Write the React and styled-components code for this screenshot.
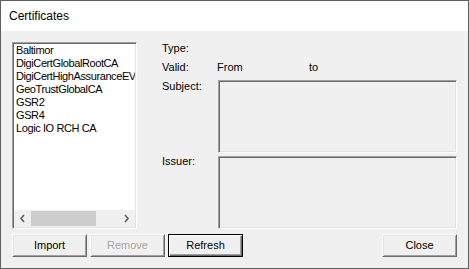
import styled, { createGlobalStyle, css } from "styled-components"

const GlobalStyle = createGlobalStyle`
    html, body {
        margin: 0;
        padding: 0;
        background: #f0f0f0;
    }
    body {
        font-family: "Liberation Sans", Arial, sans-serif;
    }
`

const sunken = css`
    box-sizing: border-box;
    border: 1px solid;
    border-color: #a0a0a0 #ffffff #ffffff #a0a0a0;
    box-shadow: inset 1px 1px 0 #696969, inset -1px -1px 0 #e3e3e3;
`

const Window = styled.div`
    width: 469px;
    height: 269px;
    box-sizing: border-box;
    border: 1px solid #5f5f5f;
    display: flex;
    flex-direction: column;
    background: #f0f0f0;
    color: #000;
`

const TitleBar = styled.div`
    flex: none;
    height: 30px;
    background: #ffffff;
    display: flex;
    align-items: center;
    padding-left: 8px;
    font-size: 12px;
`

const Body = styled.div`
    flex: 1;
    display: flex;
    flex-direction: column;
    gap: 5px;
    padding: 11px;
    font-size: 11px;
`

const Main = styled.div`
    display: flex;
    height: 187px;
`

const ListBox = styled.div`
    ${sunken};
    width: 125px;
    height: 100%;
    background: #ffffff;
    display: flex;
    flex-direction: column;
    padding: 1px;
`

const Items = styled.div`
    flex: 1;
    overflow: hidden;
    padding-left: 2px;
`

const Item = styled.div`
    height: 13px;
    line-height: 13px;
    white-space: nowrap;
    letter-spacing: -0.4px;
`

const HScroll = styled.div`
    flex: none;
    height: 17px;
    display: flex;
    background: #f0f0f0;
`

const ArrowBtn = styled.div`
    width: 17px;
    display: flex;
    align-items: center;
    justify-content: center;
`

const Track = styled.div`
    flex: 1;
    display: flex;
    align-items: stretch;
`

const Thumb = styled.div`
    width: 65px;
    margin: 1px 0;
    background: #cdcdcd;
`

const Details = styled.div`
    margin-left: 25px;
    display: flex;
    flex-direction: column;
`

const Row = styled.div`
    display: flex;
    height: ${(props) => props.height}px;
    margin-top: ${(props) => props.gap || 0}px;
`

const Label = styled.div`
    width: 56px;
    line-height: 13px;
    margin-top: ${(props) => props.offset || 0}px;
`

const Value = styled.div`
    line-height: 13px;
    width: ${(props) => props.width || "auto"};
    margin-left: ${(props) => props.shift || 0}px;
`

const InfoBox = styled.div`
    ${sunken};
    width: 239px;
    height: 100%;
    background: #f0f0f0;
`

const ButtonBar = styled.div`
    display: flex;
    gap: 3px;
`

const Spacer = styled.div`
    flex: 1;
`

const Button = styled.button`
    box-sizing: border-box;
    width: 75px;
    height: 23px;
    padding: 0 0 1px;
    margin: 0;
    font-family: "Liberation Sans", Arial, sans-serif;
    font-size: 11px;
    background: #f0f0f0;
    color: #000;
    border: 1px solid;
    border-color: #ffffff #696969 #696969 #ffffff;
    box-shadow: inset 1px 1px 0 #e3e3e3, inset -1px -1px 0 #a0a0a0;
    &:disabled {
        color: #a0a0a0;
        text-shadow: 1px 1px 0 #ffffff;
    }
    ${(props) =>
        props.$default &&
        css`
            border-color: #000;
            box-shadow: inset 1px 1px 0 #ffffff, inset -1px -1px 0 #696969,
                inset -2px -2px 0 #a0a0a0;
        `}
`

const Chevron = ({ dir }) => (
    <svg width="7" height="9" viewBox="0 0 7 9">
        <polyline
            points={dir === "left" ? "5,1 2,4.5 5,8" : "2,1 5,4.5 2,8"}
            fill="none"
            stroke="#606060"
            strokeWidth="1.6"
        />
    </svg>
)

const certs = [
    "Baltimor",
    "DigiCertGlobalRootCA",
    "DigiCertHighAssuranceEV",
    "GeoTrustGlobalCA",
    "GSR2",
    "GSR4",
    "Logic IO RCH CA",
]

const App = () => {
    return (
        <>
            <GlobalStyle />
            <Window>
                <TitleBar>Certificates</TitleBar>
                <Body>
                    <Main>
                        <ListBox>
                            <Items>
                                {certs.map((name) => (
                                    <Item key={name}>{name}</Item>
                                ))}
                            </Items>
                            <HScroll>
                                <ArrowBtn>
                                    <Chevron dir="left" />
                                </ArrowBtn>
                                <Track>
                                    <Thumb />
                                </Track>
                                <ArrowBtn>
                                    <Chevron dir="right" />
                                </ArrowBtn>
                            </HScroll>
                        </ListBox>
                        <Details>
                            <Row height={19}>
                                <Label>Type:</Label>
                            </Row>
                            <Row height={19}>
                                <Label>Valid:</Label>
                                <Value width="92px" shift={-1}>
                                    From
                                </Value>
                                <Value>to</Value>
                            </Row>
                            <Row height={73}>
                                <Label>Subject:</Label>
                                <InfoBox />
                            </Row>
                            <Row height={73} gap={3}>
                                <Label offset={-1}>Issuer:</Label>
                                <InfoBox />
                            </Row>
                        </Details>
                    </Main>
                    <ButtonBar>
                        <Button>Import</Button>
                        <Button disabled>Remove</Button>
                        <Button $default>Refresh</Button>
                        <Spacer />
                        <Button>Close</Button>
                    </ButtonBar>
                </Body>
            </Window>
        </>
    )
}

export default App
